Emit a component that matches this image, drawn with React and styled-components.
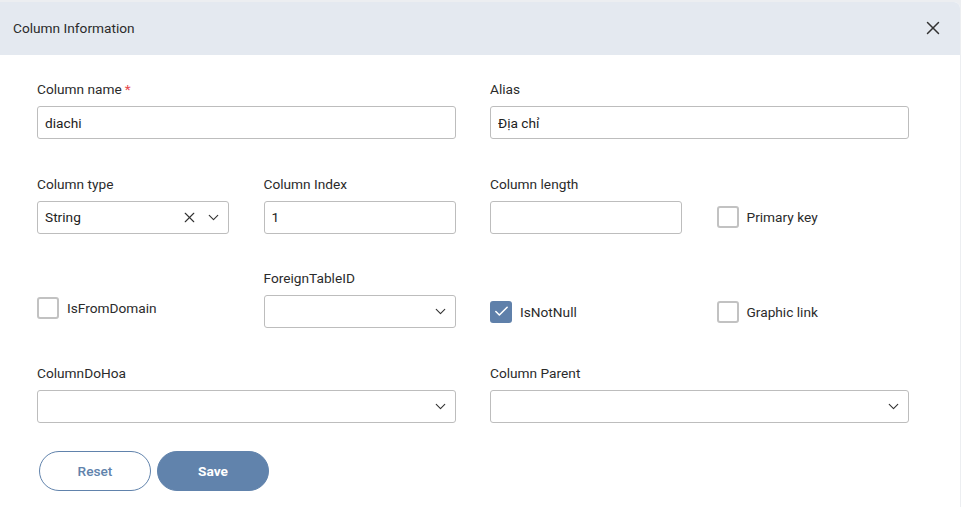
import React from 'react'
import styled, { createGlobalStyle } from 'styled-components'
import { X, ChevronDown, Check } from 'lucide-react'

const GlobalStyle = createGlobalStyle`
  html, body {
    margin: 0;
    padding: 0;
    background: #eceef1;
    font-family: Roboto, "Liberation Sans", sans-serif;
  }
  * { box-sizing: border-box; }
`;

const Dialog = styled.div`
  width: 960px;
  height: 505px;
  margin-top: 2px;
  background: #fff;
  border-top-right-radius: 6px;
  overflow: hidden;
  display: flex;
  flex-direction: column;
`;

const Header = styled.div`
  height: 53px;
  background: #e4e9f0;
  display: flex;
  align-items: center;
  justify-content: space-between;
  padding: 0 16px 1px 13px;
  color: #2b2b2b;
  font-size: 13.7px;
  flex-shrink: 0;
`;

const CloseButton = styled.button`
  background: transparent;
  border: none;
  padding: 0;
  color: #333;
  cursor: pointer;
  display: flex;
`;

const Body = styled.div`
  padding: 24px 0 0 37px;
  width: 908px;
`;

const Grid = styled.div`
  display: grid;
  grid-template-columns: repeat(4, 192px);
  column-gap: 34.5px;
  row-gap: 34.5px;
`;

const Field = styled.div`
  display: flex;
  flex-direction: column;
  grid-column: span ${p => p.$span || 1};
`;

const Label = styled.label`
  font-size: 13.7px;
  line-height: 20px;
  color: #2b2b2b;
  margin-bottom: 7px;
`;

const Required = styled.span`
  color: #e5484d;
  margin-left: 3px;
`;

const Input = styled.input`
  height: 33px;
  width: 100%;
  border: 1px solid #bdbdbd;
  border-radius: 3px;
  padding: 0 7px;
  font-family: inherit;
  font-size: 13.7px;
  color: #222;
  outline: none;
`;

const Select = styled.div`
  height: 33px;
  border: 1px solid #bdbdbd;
  border-radius: 3px;
  padding: 0 6px 0 7px;
  display: flex;
  align-items: center;
  font-size: 13.7px;
  color: #222;
`;

const SelectValue = styled.span`
  flex: 1;
`;

const SelectIcons = styled.span`
  display: flex;
  align-items: center;
  gap: 7px;
  color: #333;
`;

const CheckField = styled.label`
  align-self: end;
  height: 33px;
  display: flex;
  align-items: center;
  gap: 8px;
  font-size: 13.7px;
  color: #2b2b2b;
  margin-bottom: ${p => p.$raise || 0}px;
`;

const Box = styled.span`
  width: 22px;
  height: 22px;
  border-radius: 3px;
  border: ${p => (p.$checked ? 'none' : '2px solid #c2c2c2')};
  background: ${p => (p.$checked ? '#5f80aa' : '#fff')};
  display: flex;
  align-items: center;
  justify-content: center;
  color: #fff;
`;

const Actions = styled.div`
  display: flex;
  gap: 6px;
  margin-top: 28px;
  padding-left: 2px;
`;

const Button = styled.button`
  width: 112px;
  height: 40px;
  border-radius: 20px;
  font-family: inherit;
  font-size: 13.7px;
  cursor: pointer;
  border: 1px solid #6183ac;
  background: ${p => (p.$primary ? '#6183ac' : '#fff')};
  color: ${p => (p.$primary ? '#fff' : '#6183ac')};
  font-weight: ${p => (p.$primary ? 700 : 500)};
`;

const Dropdown = ({ value, clearable }) => (
  <Select>
    <SelectValue>{value}</SelectValue>
    <SelectIcons>
      {clearable && <X size={17} strokeWidth={1.6} />}
      <ChevronDown size={17} strokeWidth={1.6} />
    </SelectIcons>
  </Select>
);

const CheckBox = ({ label, checked, raise }) => (
  <CheckField $raise={raise}>
    <Box $checked={checked}>{checked && <Check size={17} strokeWidth={2.2} />}</Box>
    {label}
  </CheckField>
);

export default function App() {
  return (
    <>
      <GlobalStyle />
      <Dialog>
        <Header>
          Column Information
          <CloseButton>
            <X size={22} strokeWidth={1.6} />
          </CloseButton>
        </Header>
        <Body>
          <Grid>
            <Field $span={2}>
              <Label>Column name<Required>*</Required></Label>
              <Input defaultValue="diachi" />
            </Field>
            <Field $span={2}>
              <Label>Alias</Label>
              <Input defaultValue="Địa chỉ" />
            </Field>

            <Field>
              <Label>Column type</Label>
              <Dropdown value="String" clearable />
            </Field>
            <Field>
              <Label>Column Index</Label>
              <Input defaultValue="1" />
            </Field>
            <Field>
              <Label>Column length</Label>
              <Input />
            </Field>
            <CheckBox label="Primary key" />

            <CheckBox label="IsFromDomain" raise={4} />
            <Field>
              <Label>ForeignTableID</Label>
              <Dropdown />
            </Field>
            <CheckBox label="IsNotNull" checked />
            <CheckBox label="Graphic link" />

            <Field $span={2}>
              <Label>ColumnDoHoa</Label>
              <Dropdown />
            </Field>
            <Field $span={2}>
              <Label>Column Parent</Label>
              <Dropdown />
            </Field>
          </Grid>
          <Actions>
            <Button>Reset</Button>
            <Button $primary>Save</Button>
          </Actions>
        </Body>
      </Dialog>
    </>
  );
}
